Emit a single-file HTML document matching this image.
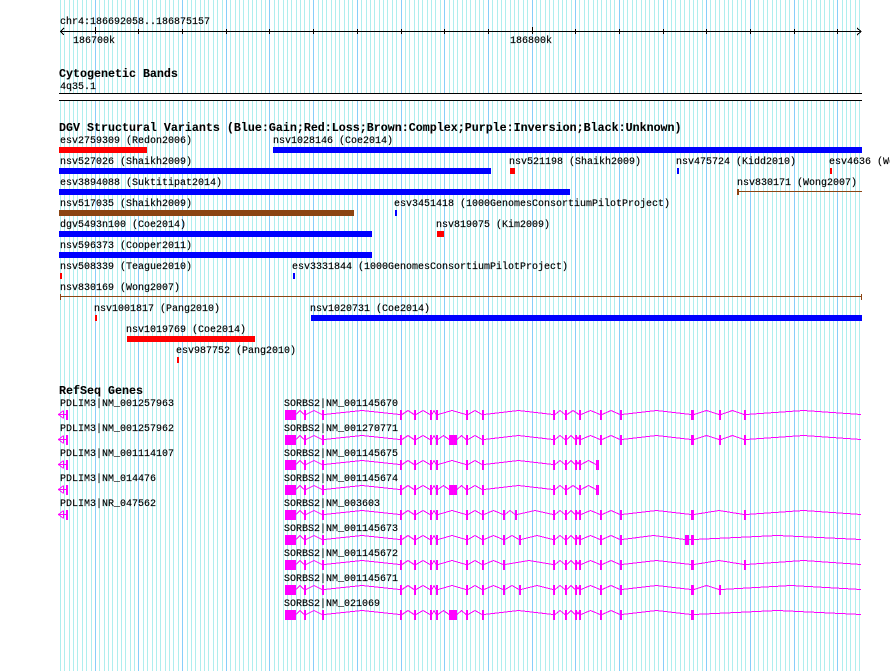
<!DOCTYPE html>
<html><head><meta charset="utf-8"><title>GBrowse</title>
<style>
html,body{margin:0;padding:0;background:#fff}
svg{display:block}
text{font-family:"Liberation Mono",monospace;font-size:10px;fill:#000;stroke:#000;stroke-width:.15px;transform:translateY(-1px)}
text.b{font-size:11.67px;font-weight:bold;stroke-width:.1px}
.i{fill:none;stroke:#f0f;stroke-width:1;vector-effect:non-scaling-stroke;transform:matrix(1,0,0,.8,0,82.5)}
.a{fill:none;stroke:#f0f;stroke-width:1}
.e{fill:none;stroke:#f0f;stroke-width:2}
.x{fill:#f0f}
</style></head><body>
<svg xmlns="http://www.w3.org/2000/svg" width="890" height="671" viewBox="0 0 890 671" shape-rendering="crispEdges">
<defs>
<g id="A">
<path class="i" d="M296 415L300 410L304 415M306 415L314 410L322 415M324 415L362 410L400 415M402 415L408 410L414 415M416 415L423 410L430 415M432 415L434 410L436 415M468 415L475 410L482 415"/>
<rect class="x" x="285" y="410" width="11" height="10"/>
<path class="e" d="M305 410V420M323 410V420M401 410V420M415 410V420M431 410V420M437 410V420M467 410V420M483 410V420"/>
</g>
<path id="B1" class="i" d="M438 415L452 410L466 415"/>
<g id="B2"><path class="i" d="M438 415L443.5 410L449 415M457 415L461.5 410L466 415"/><rect class="x" x="449" y="410" width="8" height="10"/></g>
<g id="s1"><path class="i" d="M484 415L518.5 410L553 415"/><path class="e" d="M554 410V420"/></g>
<g id="p5"><path class="i" d="M484 415L493.5 410L503 415M505 415L510 410L515 415M517 415L535 410L553 415"/><path class="e" d="M504 410V420M516 410V420M554 410V420"/></g>
<g id="p6"><path class="i" d="M484 415L493.5 410L503 415M505 415L512 410L519 415M521 415L537 410L553 415"/><path class="e" d="M504 410V420M520 410V420M554 410V420"/></g>
<g id="p7"><path class="i" d="M484 415L493.5 410L503 415M505 415L529 410L553 415"/><path class="e" d="M504 410V420M554 410V420"/></g>
<g id="s2"><path class="i" d="M555 415L560 410L565 415"/><path class="e" d="M566 410V420"/></g>
<g id="s3"><path class="i" d="M567 415L571 410L575 415M577 415L578 412L579 415"/><path class="e" d="M576 410V420M580 410V420"/></g>
<g id="s3a"><path class="i" d="M567 415L573 410L579 415"/><path class="e" d="M580 410V420"/></g>
<g id="s4"><path class="i" d="M581 415L590.5 410L600 415M602 415L611 410L620 415"/><path class="e" d="M601 410V420M621 410V420"/></g>
<g id="end"><path class="i" d="M581 415L588.5 410L596 415"/><rect class="x" x="596" y="410" width="3" height="10"/></g>
<g id="T0"><path class="i" d="M622 415L656.5 410L691 415M694 415L706.5 410L719 415M721 415L732.5 410L744 415M746 415L803.5 410L861 415"/><path class="e" d="M720 410V420M745 410V420"/><rect class="x" x="691" y="410" width="3" height="10"/></g>
<g id="T4"><path class="i" d="M622 415L656.5 410L691 415M694 415L719 410L744 415M746 415L803.5 410L861 415"/><path class="e" d="M745 410V420"/><rect class="x" x="691" y="410" width="3" height="10"/></g>
<g id="T5"><path class="i" d="M622 415L653.5 410L685 415M689 415H691M694 415L777.5 410L861 415"/><rect class="x" x="685" y="410" width="4" height="10"/><rect class="x" x="691" y="410" width="3" height="10"/></g>
<g id="T7"><path class="i" d="M622 415L656.5 410L691 415M694 415L706.5 410L719 415M721 415L791 410L861 415"/><path class="e" d="M720 410V420"/><rect class="x" x="691" y="410" width="3" height="10"/></g>
<g id="T8"><path class="i" d="M622 415L656.5 410L691 415M694 415L777.5 410L861 415"/><rect class="x" x="691" y="410" width="3" height="10"/></g>
<g id="P"><path class="a" d="M66 414.500H58.500M63.500 410.500L58.500 414.500L63.500 418.500M63.500 411V418"/><rect class="x" x="66" y="410" width="2" height="10"/></g>
</defs>

<!-- grid -->
<g transform="translate(.5 0)">
<path fill="none" stroke="#afeeee" d="M60 0V671M64 0V671M69 0V671M73 0V671M77 0V671M82 0V671M86 0V671M91 0V671M99 0V671M104 0V671M108 0V671M112 0V671M117 0V671M121 0V671M125 0V671M130 0V671M134 0V671M143 0V671M147 0V671M152 0V671M156 0V671M160 0V671M165 0V671M169 0V671M173 0V671M178 0V671M187 0V671M191 0V671M195 0V671M200 0V671M204 0V671M208 0V671M213 0V671M217 0V671M222 0V671M230 0V671M235 0V671M239 0V671M243 0V671M248 0V671M252 0V671M256 0V671M261 0V671M265 0V671M274 0V671M278 0V671M283 0V671M287 0V671M291 0V671M296 0V671M300 0V671M304 0V671M309 0V671M318 0V671M322 0V671M326 0V671M331 0V671M335 0V671M339 0V671M344 0V671M348 0V671M352 0V671M361 0V671M366 0V671M370 0V671M374 0V671M379 0V671M383 0V671M387 0V671M392 0V671M396 0V671M405 0V671M409 0V671M414 0V671M418 0V671M422 0V671M427 0V671M431 0V671M435 0V671M440 0V671M449 0V671M453 0V671M457 0V671M462 0V671M466 0V671M470 0V671M475 0V671M479 0V671M483 0V671M492 0V671M497 0V671M501 0V671M505 0V671M510 0V671M514 0V671M518 0V671M523 0V671M527 0V671M536 0V671M540 0V671M545 0V671M549 0V671M553 0V671M558 0V671M562 0V671M566 0V671M571 0V671M579 0V671M584 0V671M588 0V671M593 0V671M597 0V671M601 0V671M606 0V671M610 0V671M614 0V671M623 0V671M627 0V671M632 0V671M636 0V671M641 0V671M645 0V671M649 0V671M654 0V671M658 0V671M667 0V671M671 0V671M675 0V671M680 0V671M684 0V671M689 0V671M693 0V671M697 0V671M702 0V671M710 0V671M715 0V671M719 0V671M724 0V671M728 0V671M732 0V671M737 0V671M741 0V671M745 0V671M754 0V671M758 0V671M763 0V671M767 0V671M772 0V671M776 0V671M780 0V671M785 0V671M789 0V671M798 0V671M803 0V671M807 0V671M811 0V671M816 0V671M820 0V671M824 0V671M829 0V671M833 0V671M842 0V671M846 0V671M850 0V671M855 0V671M859 0V671"/>
<path fill="none" stroke="#87cefa" d="M95 0V671M138 0V671M182 0V671M226 0V671M269 0V671M313 0V671M357 0V671M401 0V671M444 0V671M488 0V671M532 0V671M575 0V671M619 0V671M663 0V671M706 0V671M750 0V671M794 0V671M837 0V671"/>
</g>

<!-- ruler -->
<text x="60" y="25">chr4:186692058..186875157</text>
<path fill="none" stroke="#000" d="M60 31.5H861M64 28L60.500 31.500L64 35M857 28L861 31.500L857 35"/>
<path fill="none" stroke="#000" transform="translate(.5 0)" d="M95 27V34M138 29V34M182 29V34M226 29V34M269 29V34M313 29V34M357 29V34M401 29V34M444 29V34M488 29V34M532 27V34M575 29V34M619 29V34M663 29V34M706 29V34M750 29V34M794 29V34M837 29V34"/>
<text x="73" y="44">186700k</text>
<text x="510" y="44">186800k</text>

<!-- cytogenetic -->
<text class="b" x="59" y="78">Cytogenetic Bands</text>
<text x="60" y="90">4q35.1</text>
<rect x="59" y="94" width="803" height="6" fill="#fff"/>
<rect x="59" y="93" width="803" height="1" fill="#000"/>
<rect x="59" y="100" width="803" height="1" fill="#000"/>

<!-- DGV -->
<text class="b" x="59" y="132">DGV Structural Variants (Blue:Gain;Red:Loss;Brown:Complex;Purple:Inversion;Black:Unknown)</text>
<text x="60" y="144">esv2759309 (Redon2006)</text>
<text x="273" y="144">nsv1028146 (Coe2014)</text>
<text x="60" y="165">nsv527026 (Shaikh2009)</text>
<text x="509" y="165">nsv521198 (Shaikh2009)</text>
<text x="676" y="165">nsv475724 (Kidd2010)</text>
<text x="829" y="165">esv4636 (Wong2007)</text>
<text x="60" y="186">esv3894088 (Suktitipat2014)</text>
<text x="737" y="186">nsv830171 (Wong2007)</text>
<text x="60" y="207">nsv517035 (Shaikh2009)</text>
<text x="394" y="207">esv3451418 (1000GenomesConsortiumPilotProject)</text>
<text x="60" y="228">dgv5493n100 (Coe2014)</text>
<text x="436" y="228">nsv819075 (Kim2009)</text>
<text x="60" y="249">nsv596373 (Cooper2011)</text>
<text x="60" y="270">nsv508339 (Teague2010)</text>
<text x="292" y="270">esv3331844 (1000GenomesConsortiumPilotProject)</text>
<text x="60" y="291">nsv830169 (Wong2007)</text>
<text x="94" y="312">nsv1001817 (Pang2010)</text>
<text x="310" y="312">nsv1020731 (Coe2014)</text>
<text x="126" y="333">nsv1019769 (Coe2014)</text>
<text x="176" y="354">esv987752 (Pang2010)</text>

<g fill="#f00">
<rect x="59" y="147" width="88" height="6"/>
<rect x="510" y="168" width="5" height="6"/>
<rect x="830" y="168" width="2" height="6"/>
<rect x="437" y="231" width="7" height="6"/>
<rect x="60" y="273" width="2" height="6"/>
<rect x="95" y="315" width="2" height="6"/>
<rect x="127" y="336" width="128" height="6"/>
<rect x="177" y="357" width="2" height="6"/>
</g>
<g fill="#00f">
<rect x="273" y="147" width="589" height="6"/>
<rect x="59" y="168" width="432" height="6"/>
<rect x="677" y="168" width="2" height="6"/>
<rect x="59" y="189" width="511" height="6"/>
<rect x="395" y="210" width="2" height="6"/>
<rect x="59" y="231" width="313" height="6"/>
<rect x="59" y="252" width="313" height="6"/>
<rect x="293" y="273" width="2" height="6"/>
<rect x="311" y="315" width="551" height="6"/>
</g>
<g fill="#8b4513">
<rect x="59" y="210" width="295" height="6"/>
<rect x="737" y="189" width="2" height="6"/>
<rect x="737" y="191" width="125" height="1"/>
<rect x="60" y="296" width="802" height="1"/>
<rect x="60" y="294" width="1" height="6"/>
<rect x="861" y="294" width="1" height="6"/>
</g>

<!-- RefSeq -->
<text class="b" x="59" y="395">RefSeq Genes</text>
<text x="60" y="407">PDLIM3|NM_001257963</text>
<text x="60" y="432">PDLIM3|NM_001257962</text>
<text x="60" y="457">PDLIM3|NM_001114107</text>
<text x="60" y="482">PDLIM3|NM_014476</text>
<text x="60" y="507">PDLIM3|NR_047562</text>
<use href="#P"/><use href="#P" y="25"/><use href="#P" y="50"/><use href="#P" y="75"/><use href="#P" y="100"/>

<text x="284" y="407">SORBS2|NM_001145670</text>
<text x="284" y="432">SORBS2|NM_001270771</text>
<text x="284" y="457">SORBS2|NM_001145675</text>
<text x="284" y="482">SORBS2|NM_001145674</text>
<text x="284" y="507">SORBS2|NM_003603</text>
<text x="284" y="532">SORBS2|NM_001145673</text>
<text x="284" y="557">SORBS2|NM_001145672</text>
<text x="284" y="582">SORBS2|NM_001145671</text>
<text x="284" y="607">SORBS2|NM_021069</text>

<g><use href="#A"/><use href="#B1"/><use href="#s1"/><use href="#s2"/><use href="#s3a"/><use href="#s4"/><use href="#T0"/></g>
<g transform="translate(0 25)"><use href="#A"/><use href="#B2"/><use href="#s1"/><use href="#s2"/><use href="#s3"/><use href="#s4"/><use href="#T0"/></g>
<g transform="translate(0 50)"><use href="#A"/><use href="#B1"/><use href="#s1"/><use href="#s2"/><use href="#s3"/><use href="#end"/></g>
<g transform="translate(0 75)"><use href="#A"/><use href="#B2"/><use href="#s1"/><use href="#s2"/><use href="#s3a"/><use href="#end"/></g>
<g transform="translate(0 100)"><use href="#A"/><use href="#B1"/><use href="#p5"/><use href="#s2"/><use href="#s3"/><use href="#s4"/><use href="#T4"/></g>
<g transform="translate(0 125)"><use href="#A"/><use href="#B1"/><use href="#p6"/><use href="#s2"/><use href="#s3"/><use href="#s4"/><use href="#T5"/></g>
<g transform="translate(0 150)"><use href="#A"/><use href="#B1"/><use href="#p7"/><use href="#s2"/><use href="#s3"/><use href="#s4"/><use href="#T4"/></g>
<g transform="translate(0 175)"><use href="#A"/><use href="#B1"/><use href="#p6"/><use href="#s2"/><use href="#s3"/><use href="#s4"/><use href="#T7"/></g>
<g transform="translate(0 200)"><use href="#A"/><use href="#B2"/><use href="#s1"/><use href="#s2"/><use href="#s3"/><use href="#s4"/><use href="#T8"/></g>
</svg>
</body></html>
